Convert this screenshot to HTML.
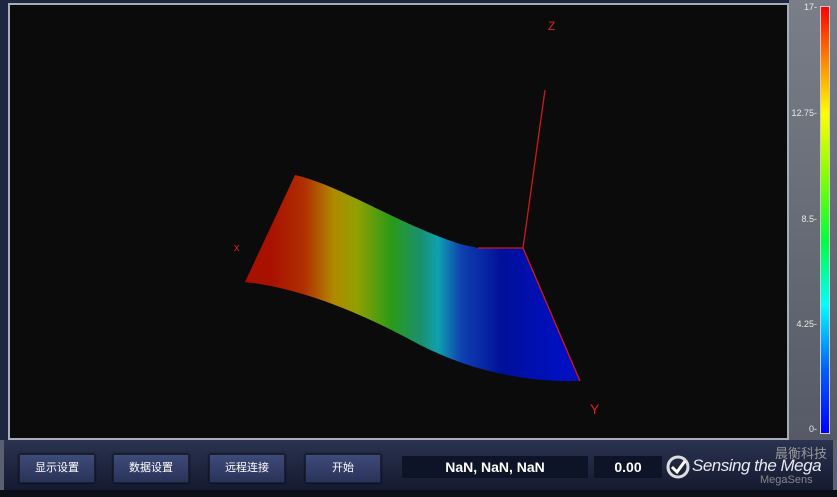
<!DOCTYPE html>
<html><head><meta charset="utf-8"><style>
html,body{margin:0;padding:0;width:837px;height:497px;overflow:hidden;background:#1e2640;font-family:"Liberation Sans","Noto Sans CJK SC",sans-serif}
.plot{position:absolute;left:8px;top:3px;width:781px;height:437px;background:#0b0b0b;border:2px solid #a8acb6;box-sizing:border-box}
.side{position:absolute;left:789px;top:0;width:48px;height:440px;background:linear-gradient(#7a7e88,#555a66)}
.bar{position:absolute;left:820px;top:6px;width:8px;height:426px;border:1px solid #ccc;background:linear-gradient(#ff0000,#ff8000 12%,#ffff00 25%,#80ff00 40%,#00ff40 55%,#00ffff 70%,#0060ff 85%,#0000ff)}
.tick{position:absolute;right:20px;color:#e8e8e8;font-size:9px}
.bottom{position:absolute;left:0;top:440px;width:837px;height:50px;background:linear-gradient(#2a3350,#141a30);border-left:4px solid #5a6070;border-right:4px solid #5a6070;box-sizing:border-box}
.strip{position:absolute;left:0;top:490px;width:837px;height:7px;background:#0c0f18}
.btn{position:absolute;top:454px;height:27px;width:74px;background:linear-gradient(#3e4a78,#2a3358);border:1px solid #1a1f36;box-shadow:0 0 2px #000;color:#fff;font-size:11px;text-align:center;line-height:27px}
.box{position:absolute;top:456px;height:22px;background:#0d1428;color:#fff;font-size:14px;font-weight:bold;text-align:center;line-height:22px}
</style></head><body>
<div class="side"></div>
<div class="bar"></div>
<div class="tick" style="top:2px">17-</div>
<div class="tick" style="top:108px">12.75-</div>
<div class="tick" style="top:214px">8.5-</div>
<div class="tick" style="top:319px">4.25-</div>
<div class="tick" style="top:424px">0-</div>
<div class="plot"></div>
<svg width="837" height="440" style="position:absolute;left:0;top:0">
<defs><linearGradient id="g" gradientUnits="userSpaceOnUse" x1="270" y1="0" x2="560" y2="0">
<stop offset="0" stop-color="#a81000"/><stop offset="0.12" stop-color="#b03000"/><stop offset="0.22" stop-color="#b08a00"/><stop offset="0.3" stop-color="#90a000"/><stop offset="0.42" stop-color="#2a9a18"/><stop offset="0.52" stop-color="#1a9070"/><stop offset="0.58" stop-color="#10a0b0"/><stop offset="0.66" stop-color="#1040b0"/><stop offset="0.8" stop-color="#00109a"/><stop offset="1" stop-color="#0010c0"/></linearGradient></defs>
<path d="M295,175 C340,185 400,225 460,244 L478,248 L523,248 L580,381 C520,382 470,370 420,345 C360,312 300,288 245,282 Z" fill="url(#g)"/>
<path d="M478,248 L523,248 L545,90 M523,248 L580,381" stroke="#d01818" stroke-width="1.3" fill="none"/>
<text x="548" y="30" fill="#e02020" font-size="12" font-family="Liberation Sans">Z</text>
<text x="234" y="251" fill="#e02020" font-size="11" font-family="Liberation Sans">x</text>
<text x="590" y="414" fill="#e02020" font-size="14" font-family="Liberation Sans">Y</text>
</svg>
<div class="bottom"></div>
<div class="strip"></div>
<div class="btn" style="left:19px">显示设置</div>
<div class="btn" style="left:113px">数据设置</div>
<div class="btn" style="left:209px">远程连接</div>
<div class="btn" style="left:305px">开始</div>
<div class="box" style="left:402px;width:186px">NaN, NaN, NaN</div>
<div class="box" style="left:594px;width:68px">0.00</div>
<svg width="24" height="24" style="position:absolute;left:666px;top:455px"><circle cx="12" cy="12" r="10" fill="none" stroke="#ddd" stroke-width="3"/><path d="M6,12 L11,17 L19,6" stroke="#fff" stroke-width="3" fill="none"/></svg>
<div style="position:absolute;left:692px;top:456px;color:#e8e8ee;font-size:17px;font-style:italic;letter-spacing:-0.5px">Sensing the Mega</div>
<div style="position:absolute;left:760px;top:474px;color:#888;font-size:11px">MegaSens</div>
<div style="position:absolute;left:775px;top:443px;color:#999;font-size:13px">晨衡科技</div>
</body></html>
